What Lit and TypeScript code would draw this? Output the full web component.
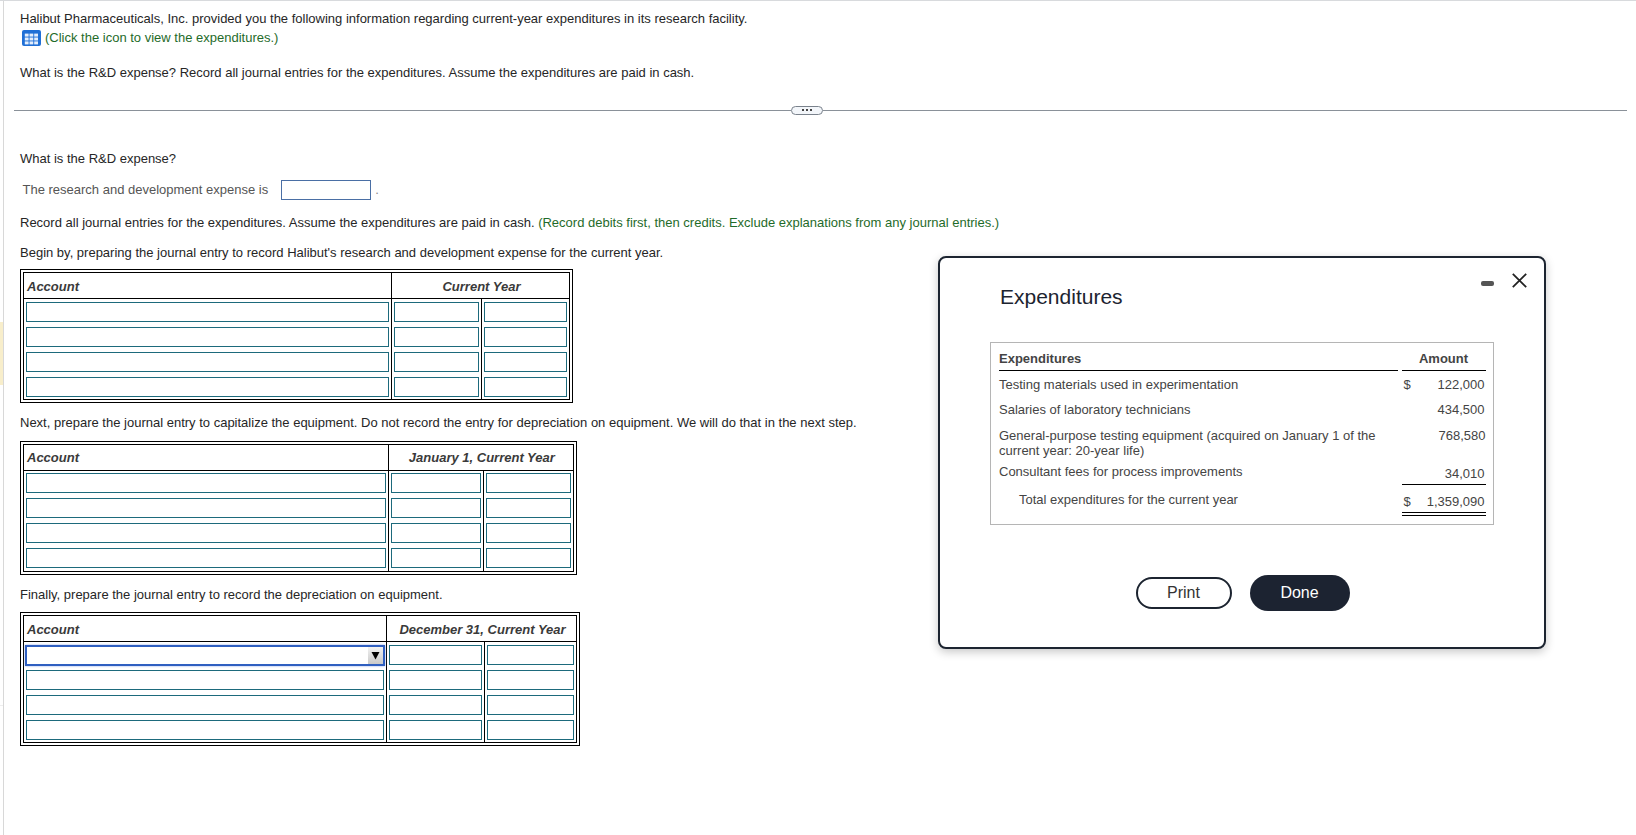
import { LitElement, html, css, svg } from "lit";
import { customElement, property } from "lit/decorators.js";

@customElement("journal-table")
class JournalTable extends LitElement {
  @property() heading = "";
  @property() cols = "368px 90px 87px";
  @property({ type: Boolean }) focused = false;

  static styles = css`
    :host { display: block; width: fit-content; }
    .outer { border: 1px solid #000; padding: 2px; }
    .inner { border: 1px solid #000; display: grid; }
    .h { height: 26px; box-sizing: border-box; padding-top: 1.5px; border-bottom: 1px solid #000; display: flex; align-items: center; font: italic bold 13px "Liberation Sans", Arial, sans-serif; color: #3a3a3a; }
    .acct { padding-left: 3px; }
    .date { grid-column: span 2; justify-content: center; padding-left: 2px; }
    .c { height: 25px; padding: 2.5px 2px; box-sizing: border-box; display: flex; }
    .line { border-right: 1px solid #000; }
    input { flex: 1; min-width: 0; width: 100%; box-sizing: border-box; height: 20px; margin: 0; padding: 0; border: 1px solid #1d6a7c; outline: none; background: #fff; border-radius: 0; }
    .sel { flex: 1; margin: 0 -1px; height: 21px; box-sizing: border-box; border: 2px solid #2f5fc0; box-shadow: 0 0 2px #8fa8e8; display: flex; justify-content: flex-end; background: #fff; }
    .btn { width: 15px; background: linear-gradient(#f2f2f2, #c9c9c9); display: flex; align-items: center; justify-content: center; }
  `;

  render() {
    const rows = [0, 1, 2, 3];
    return html`<div class="outer"><div class="inner" style="grid-template-columns:${this.cols}">
      <div class="h acct line">Account</div><div class="h date">${this.heading}</div>
      ${rows.map(
        (i) => html`
          <div class="c line">
            ${this.focused && i === 0
              ? html`<div class="sel"><div class="btn"><svg width="9" height="9" viewBox="0 0 9 9"><polygon points="0.5,1 8.5,1 4.5,8.5" fill="#000"></polygon></svg></div></div>`
              : html`<input aria-label="Account" />`}
          </div>
          <div class="c line"><input aria-label="Debit" /></div>
          <div class="c"><input aria-label="Credit" /></div>
        `
      )}
    </div></div>`;
  }
}

@customElement("expenditures-modal")
class ExpendituresModal extends LitElement {
  static styles = css`
    :host { display: block; position: absolute; left: 938px; top: 256px; width: 608px; height: 393px; box-sizing: border-box; background: #fff; border: 2px solid #1c2430; border-radius: 8px; box-shadow: 0 3px 10px rgba(0,0,0,.22); font-family: "Liberation Sans", Arial, sans-serif; }
    .head { display: flex; justify-content: space-between; padding: 16px 17px 0 60px; height: 84px; box-sizing: border-box; }
    h2 { margin: 11px 0 0; font-size: 21px; line-height: 24px; font-weight: 400; color: #1c2430; }
    .ctl { display: flex; gap: 18px; align-items: center; height: 15px; margin-top: -1px; }
    .min { width: 13px; height: 5px; margin-top: 6px; background: #555; border-radius: 2px; }
    .box { margin-left: 50px; width: 504px; height: 183px; box-sizing: border-box; border: 1px solid #b5b5b5; padding: 0 8px; display: grid; grid-template-columns: 398.5px 84px; column-gap: 4px; align-content: start; font-size: 13px; line-height: 15px; color: #444; }
    .th { height: 28px; box-sizing: border-box; padding-top: 8px; border-bottom: 1px solid #000; font-weight: 700; color: #444; }
    .amt-h { text-align: center; }
    .r { padding: 6px 0 3.5px; }
    .r2 { padding: 6.5px 0 3px; }
    .amt { display: flex; justify-content: space-between; padding-left: 2px; padding-right: 1px; }
    .gen { padding: 7.5px 0 0.5px; }
    .wrap { width: 385px; }
    .con { padding: 6px 0 0; }
    .con-a { padding-top: 7.5px; padding-bottom: 3.5px; border-bottom: 1px solid #000; }
    .tot { padding: 6.5px 0 0 20px; }
    .tot-a { padding-top: 8.5px; padding-bottom: 3.5px; border-bottom: 4px double #000; }
    .btns { display: flex; justify-content: center; align-items: center; gap: 18px; margin-top: 50px; padding-left: 1px; }
    button { font: 16px "Liberation Sans", Arial, sans-serif; padding: 0; cursor: pointer; }
    .print { width: 96px; height: 32px; border: 2px solid #1c2430; border-radius: 16px; background: #fff; color: #333; }
    .done { width: 100px; height: 36px; border: 0; border-radius: 18px; background: #1c2331; color: #fff; }
  `;

  render() {
    return html`
      <div class="head">
        <h2>Expenditures</h2>
        <div class="ctl">
          <div class="min"></div>
          <svg width="15" height="15" viewBox="0 0 15 15">${svg`<path d="M0.8 0.8 L14.2 14.2 M14.2 0.8 L0.8 14.2" stroke="#222" stroke-width="1.8" fill="none"></path>`}</svg>
        </div>
      </div>
      <div class="box">
        <div class="th">Expenditures</div><div class="th amt-h">Amount</div>
        <div class="r">Testing materials used in experimentation</div>
        <div class="r amt"><span>$</span><span>122,000</span></div>
        <div class="r2">Salaries of laboratory technicians</div>
        <div class="r2 amt"><span></span><span>434,500</span></div>
        <div class="gen"><div class="wrap">General-purpose testing equipment (acquired on January 1 of the current year: 20-year life)</div></div>
        <div class="gen amt"><span></span><span>768,580</span></div>
        <div class="con">Consultant fees for process improvements</div>
        <div class="con-a amt"><span></span><span>34,010</span></div>
        <div class="tot">Total expenditures for the current year</div>
        <div class="tot-a amt"><span>$</span><span>1,359,090</span></div>
      </div>
      <div class="btns"><button class="print">Print</button><button class="done">Done</button></div>
    `;
  }
}

@customElement("app-root")
class AppRoot extends LitElement {
  static styles = css`
    :host { display: block; position: relative; height: 835px; overflow: hidden; background: #fff; font-family: "Liberation Sans", Arial, sans-serif; font-size: 13px; line-height: 16px; color: #262626; }
    .page { display: flex; height: 835px; box-sizing: border-box; border-top: 1px solid #d8dadd; }
    .rail { width: 3px; flex: none; display: flex; flex-direction: column; }
    .strip { margin-top: 321px; height: 63px; background: #f8eecb; }
    .tick { margin-top: 320px; height: 1px; background: #eee; }
    .content { flex: 1; border-left: 1px solid #d8d8d8; padding: 9.7px 0 0 16px; min-width: 0; }
    p { margin: 0; white-space: nowrap; }
    .green { color: #1f6b2a; }
    .iconrow { display: flex; align-items: center; gap: 4px; margin: 3.3px 0 0 2px; }
    .sep { display: flex; align-items: center; margin: 24.8px 0 0 -6px; width: 1613px; height: 9px; }
    .sep i { height: 1px; background: #8a9199; display: block; }
    .sep .l { width: 777px; }
    .sep .r { flex: 1; }
    .pill { width: 32px; height: 9px; box-sizing: border-box; border: 1px solid #7a828c; border-radius: 5px; background: #f3f6fa; display: flex; align-items: center; justify-content: center; gap: 2px; }
    .pill b { width: 2px; height: 2px; background: #444; display: block; }
    .m19 { margin-top: 19px; }
    .m36 { margin-top: 36px; }
    .fill { display: flex; align-items: center; margin: 13.5px 0 0 2.5px; color: #555; }
    .amount { width: 90px; height: 20px; box-sizing: border-box; margin: 0 0 0 13px; padding: 0; border: 1px solid #4a6fa5; background: #fff; outline: none; }
    .dot { margin-left: 4px; color: #888; }
    .m15 { margin-top: 15px; }
    .m13 { margin-top: 13.5px; }
    journal-table { margin-top: 8.5px; }
    .after { margin-top: 12px; }
    .t2 { margin-top: 9.3px; }
    .t3 { margin-top: 9.6px; }
  `;

  render() {
    return html`
      <div class="page">
        <div class="rail"><div class="strip"></div><div class="tick"></div></div>
        <div class="content">
          <p>Halibut Pharmaceuticals, Inc. provided you the following information regarding current-year expenditures in its research facility.</p>
          <div class="iconrow green">
            <svg width="19" height="16" viewBox="0 0 19 16">
              <rect width="19" height="16" rx="2" fill="#1f6fd6"></rect>
              ${[0, 1, 2].map((r) =>
                [0, 1, 2].map(
                  (c) => svg`<rect x="${2.8 + c * 4.7}" y="${3.6 + r * 3.9}" width="3.8" height="3" fill="#e4eefc"></rect>`
                )
              )}
            </svg>
            <span>(Click the icon to view the expenditures.)</span>
          </div>
          <p class="m19">What is the R&amp;D expense? Record all journal entries for the expenditures. Assume the expenditures are paid in cash.</p>
          <div class="sep"><i class="l"></i><div class="pill"><b></b><b></b><b></b></div><i class="r"></i></div>
          <p class="m36">What is the R&amp;D expense?</p>
          <div class="fill">The research and development expense is <input class="amount" aria-label="Expense" /><span class="dot">.</span></div>
          <p class="m15">Record all journal entries for the expenditures. Assume the expenditures are paid in cash. <span class="green">(Record debits first, then credits. Exclude explanations from any journal entries.)</span></p>
          <p class="m13">Begin by, preparing the journal entry to record Halibut's research and development expense for the current year.</p>
          <journal-table heading="Current Year" cols="368px 90px 87px"></journal-table>
          <p class="after">Next, prepare the journal entry to capitalize the equipment. Do not record the entry for depreciation on equipment. We will do that in the next step.</p>
          <journal-table class="t2" heading="January 1, Current Year" cols="365px 95px 88.7px"></journal-table>
          <p class="after">Finally, prepare the journal entry to record the depreciation on equipment.</p>
          <journal-table class="t3" heading="December 31, Current Year" cols="363px 98px 91px" focused></journal-table>
        </div>
      </div>
      <expenditures-modal></expenditures-modal>
    `;
  }
}
